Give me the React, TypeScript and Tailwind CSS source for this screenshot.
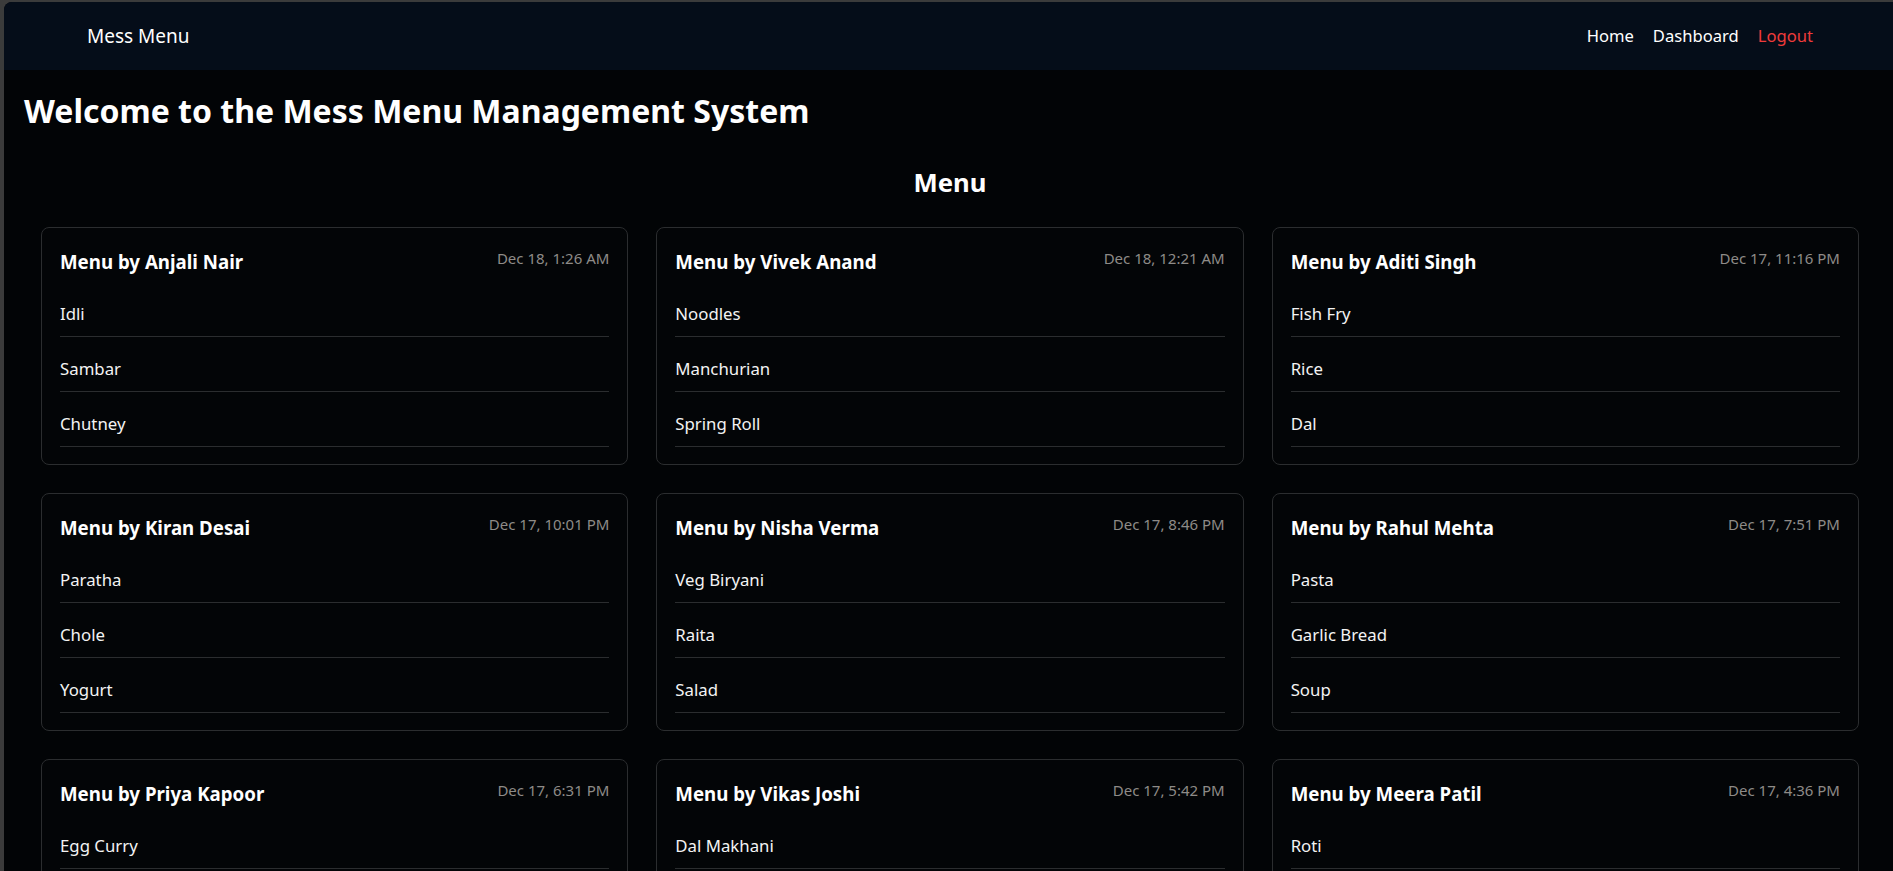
import React from "react";

type Menu = { by: string; date: string; items: string[] };

const menus: Menu[] = [
  { by: "Anjali Nair", date: "Dec 18, 1:26 AM", items: ["Idli", "Sambar", "Chutney"] },
  { by: "Vivek Anand", date: "Dec 18, 12:21 AM", items: ["Noodles", "Manchurian", "Spring Roll"] },
  { by: "Aditi Singh", date: "Dec 17, 11:16 PM", items: ["Fish Fry", "Rice", "Dal"] },
  { by: "Kiran Desai", date: "Dec 17, 10:01 PM", items: ["Paratha", "Chole", "Yogurt"] },
  { by: "Nisha Verma", date: "Dec 17, 8:46 PM", items: ["Veg Biryani", "Raita", "Salad"] },
  { by: "Rahul Mehta", date: "Dec 17, 7:51 PM", items: ["Pasta", "Garlic Bread", "Soup"] },
  { by: "Priya Kapoor", date: "Dec 17, 6:31 PM", items: ["Egg Curry", "Rice", "Papad"] },
  { by: "Vikas Joshi", date: "Dec 17, 5:42 PM", items: ["Dal Makhani", "Naan", "Salad"] },
  { by: "Meera Patil", date: "Dec 17, 4:36 PM", items: ["Roti", "Paneer", "Dal"] },
];

function Card({ m }: { m: Menu }) {
  return (
    <div className="rounded-lg border border-[#2b2d2f] bg-[#030507] px-[18px] pt-[20px] pb-[17px]">
      <div className="flex items-start justify-between">
        <div className="text-[18.7px] leading-[28px] font-bold text-white">Menu by {m.by}</div>
        <div className="text-[15px] leading-[20px] text-[#8e8b87]">{m.date}</div>
      </div>
      <div className="mt-[6px]">
        {m.items.map((it) => (
          <div
            key={it}
            className="border-b border-[#2b2d2f] pt-[19px] pb-[10px] text-[16.8px] leading-[25px] text-[#f3f3f3]"
          >
            {it}
          </div>
        ))}
      </div>
    </div>
  );
}

export default function App() {
  return (
    <div
      className="h-[871px] overflow-hidden bg-[#3b3b3b] pl-1 pt-[2px]"
      style={{ fontFamily: '"Noto Sans", "Open Sans", sans-serif' }}
    >
      <div className="h-full overflow-hidden rounded-tl-lg bg-[#020406]">
        <nav className="flex h-[68px] items-center justify-between bg-[#050d19] pl-[83px] pr-20">
          <div className="text-[19px] text-white">Mess Menu</div>
          <div className="flex items-center gap-[19px] text-[16.6px]">
            <a className="text-white">Home</a>
            <a className="text-white">Dashboard</a>
            <a className="text-[#ef3b3b]">Logout</a>
          </div>
        </nav>
        <main className="px-5 pt-[21px]">
          <h1 className="text-[32px] leading-[40px] font-bold text-white">
            Welcome to the Mess Menu Management System
          </h1>
          <section className="mt-[35px] pl-[17px] pr-[14px]">
            <h2 className="mb-[27px] text-center text-[25.7px] leading-[34px] font-bold text-white">Menu</h2>
            <div className="grid grid-cols-3 gap-7">
              {menus.map((m) => (
                <Card key={m.by} m={m} />
              ))}
            </div>
          </section>
        </main>
      </div>
    </div>
  );
}
